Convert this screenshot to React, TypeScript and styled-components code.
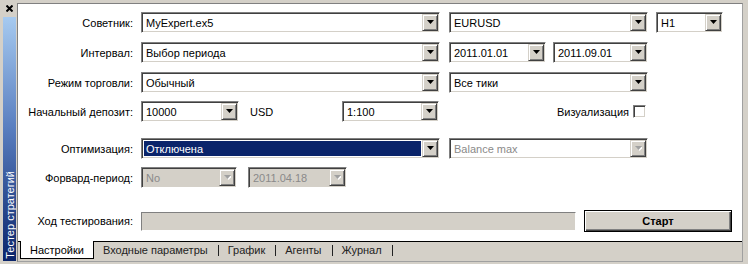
import { Fragment } from "react";
import styled, { createGlobalStyle } from "styled-components";

const GlobalStyle = createGlobalStyle`
	html, body {
		margin: 0;
		padding: 0;
		background: #d4d0c8;
	}
	body {
		font-family: "Liberation Sans", Arial, sans-serif;
		font-size: 11px;
		color: #000;
	}
`;

const Window = styled.div`
	display: flex;
	width: 748px;
	height: 264px;
	background: #d4d0c8;
	overflow: hidden;
`;

const SideStrip = styled.div`
	display: flex;
	flex-direction: column;
	width: 17px;
	flex-shrink: 0;
`;

const CloseMark = styled.div`
	display: flex;
	align-items: center;
	justify-content: center;
	height: 17px;
	padding-left: 1px;
`;

const SideBar = styled.div`
	display: flex;
	align-items: flex-end;
	justify-content: center;
	flex: 1;
	width: 13px;
	margin: 0 0 3px 3px;
	background: linear-gradient(to bottom, #a6caf0 0%, #5a7fc0 45%, #0a246a 100%);
`;

const SideTitle = styled.span`
	writing-mode: vertical-rl;
	transform: rotate(180deg);
	color: #fff;
	font-size: 11px;
	white-space: nowrap;
	padding-top: 2px;
`;

const Panel = styled.div`
	display: flex;
	flex-direction: column;
	flex: 1;
	height: 257px;
	margin: 3px 5px 0 0;
	border: 1px solid #808080;
	border-right-color: #a0a0a0;
	border-bottom-color: #a0a0a0;
`;

const Form = styled.div`
	display: flex;
	flex-direction: column;
	flex: 1;
	background: #fff;
	padding-top: 8px;
`;

const Row = styled.div<{ $gap: number; $h?: number }>`
	display: flex;
	align-items: center;
	height: ${({ $h }) => $h ?? 21}px;
	margin-top: ${({ $gap }) => $gap}px;
`;

const Label = styled.span`
	width: 115px;
	margin-right: 8px;
	text-align: right;
	white-space: nowrap;
`;

const Combo = styled.div<{ $w: number; $ml?: number; $disabled?: boolean }>`
	display: flex;
	align-items: stretch;
	box-sizing: border-box;
	width: ${({ $w }) => $w}px;
	height: 21px;
	margin-left: ${({ $ml }) => $ml ?? 0}px;
	padding: 1px;
	border: 1px solid;
	border-color: #808080 #ffffff #ffffff #808080;
	box-shadow: inset 1px 1px 0 #404040, inset -1px -1px 0 #d4d0c8;
	background: ${({ $disabled }) => ($disabled ? "#d4d0c8" : "#fff")};
`;

const ComboText = styled.span<{ $selected?: boolean; $muted?: boolean }>`
	display: flex;
	align-items: center;
	flex: 1;
	margin: 1px;
	padding-left: 2px;
	white-space: nowrap;
	overflow: hidden;
	background: ${({ $selected }) => ($selected ? "#0a246a" : "transparent")};
	color: ${({ $selected, $muted }) =>
		$selected ? "#fff" : $muted ? "#8a8a8a" : "#000"};
`;

const DropButton = styled.div`
	display: flex;
	align-items: center;
	justify-content: center;
	box-sizing: border-box;
	width: 16px;
	border: 1px solid;
	border-color: #d4d0c8 #404040 #404040 #d4d0c8;
	box-shadow: inset 1px 1px 0 #fff, inset -1px -1px 0 #808080;
	background: #d4d0c8;
`;

const Unit = styled.span`
	width: 92px;
	margin-left: 11px;
`;

const CheckGroup = styled.div`
	display: flex;
	align-items: center;
	justify-content: flex-end;
	width: 207px;
	padding-right: 1px;
	gap: 4px;
`;

const CheckBox = styled.div`
	box-sizing: border-box;
	width: 13px;
	height: 13px;
	border: 1px solid;
	border-color: #808080 #ffffff #ffffff #808080;
	box-shadow: inset 1px 1px 0 #404040, inset -1px -1px 0 #d4d0c8;
	background: #fff;
`;

const Progress = styled.div`
	box-sizing: border-box;
	width: 435px;
	height: 19px;
	border: 1px solid;
	border-color: #808080 #ffffff #ffffff #808080;
	background: #d4d0c8;
`;

const StartButton = styled.button`
	box-sizing: border-box;
	width: 148px;
	height: 22px;
	margin-left: 8px;
	padding: 0;
	border: 1px solid #000;
	box-shadow: inset 1px 1px 0 #fff, inset -1px -1px 0 #404040,
		inset -2px -2px 0 #808080;
	background: #d4d0c8;
	font-family: "Liberation Sans", Arial, sans-serif;
	font-size: 11px;
	font-weight: bold;
	color: #000;
`;

const TabBar = styled.div`
	display: flex;
	align-items: flex-start;
	height: 19px;
	padding-left: 2px;
	border-top: 1px solid #000;
	background: #d4d0c8;
`;

const Tab = styled.div<{ $active?: boolean }>`
	display: flex;
	align-items: center;
	height: ${({ $active }) => ($active ? 17 : 16)}px;
	margin-top: ${({ $active }) => ($active ? -1 : 0)}px;
	padding: ${({ $active }) => ($active ? "0 9px" : "0 10px 0 9px")};
	border: ${({ $active }) => ($active ? "1px solid #000" : "none")};
	border-top: none;
	background: ${({ $active }) => ($active ? "#fff" : "transparent")};
	color: ${({ $active }) => ($active ? "#000" : "#222")};
	white-space: nowrap;
`;

const TabSeparator = styled.span`
	width: 1px;
	height: 11px;
	margin-top: 3px;
	background: #222;
`;

function Arrow({ disabled }: { disabled?: boolean }) {
	return (
		<svg width="7" height="5" viewBox="0 0 7 5">
			{disabled && <path d="M1 1h7l-3.5 4z" fill="#fff" />}
			<path d="M0 0h7l-3.5 4z" fill={disabled ? "#a0a0a0" : "#000"} />
		</svg>
	);
}

type ComboProps = {
	text: string;
	w: number;
	ml?: number;
	selected?: boolean;
	disabled?: boolean;
	muted?: boolean;
};

function ComboBox({ text, w, ml, selected, disabled, muted }: ComboProps) {
	return (
		<Combo $w={w} $ml={ml} $disabled={disabled}>
			<ComboText $selected={selected} $muted={muted || disabled}>
				{text}
			</ComboText>
			<DropButton>
				<Arrow disabled={disabled || muted} />
			</DropButton>
		</Combo>
	);
}

const tabs = ["Входные параметры", "График", "Агенты", "Журнал"];

export default function App() {
	return (
		<>
			<GlobalStyle />
			<Window>
				<SideStrip>
					<CloseMark>
						<svg width="7" height="7" viewBox="0 0 7 7">
							<path d="M0.5 0.5l6 6M6.5 0.5l-6 6" stroke="#000" strokeWidth="2" />
						</svg>
					</CloseMark>
					<SideBar>
						<SideTitle>Тестер стратегий</SideTitle>
					</SideBar>
				</SideStrip>

				<Panel>
					<Form>
						<Row $gap={0}>
							<Label>Советник:</Label>
							<ComboBox text="MyExpert.ex5" w={299} />
							<ComboBox text="EURUSD" w={199} ml={9} />
							<ComboBox text="H1" w={67} ml={8} />
						</Row>
						<Row $gap={9}>
							<Label>Интервал:</Label>
							<ComboBox text="Выбор периода" w={299} />
							<ComboBox text="2011.01.01" w={97} ml={9} />
							<ComboBox text="2011.09.01" w={95} ml={7} />
						</Row>
						<Row $gap={9}>
							<Label>Режим торговли:</Label>
							<ComboBox text="Обычный" w={299} />
							<ComboBox text="Все тики" w={199} ml={9} />
						</Row>
						<Row $gap={8}>
							<Label>Начальный депозит:</Label>
							<ComboBox text="10000" w={98} />
							<Unit>USD</Unit>
							<ComboBox text="1:100" w={97} />
							<CheckGroup>
								<span>Визуализация</span>
								<CheckBox />
							</CheckGroup>
						</Row>
						<Row $gap={16}>
							<Label>Оптимизация:</Label>
							<ComboBox text="Отключена" w={299} selected />
							<ComboBox text="Balance max" w={199} ml={9} muted />
						</Row>
						<Row $gap={8}>
							<Label>Форвард-период:</Label>
							<ComboBox text="No" w={96} disabled />
							<ComboBox text="2011.04.18" w={99} ml={11} disabled />
						</Row>
						<Row $gap={22} $h={22}>
							<Label>Ход тестирования:</Label>
							<Progress />
							<StartButton>Старт</StartButton>
						</Row>
					</Form>
					<TabBar>
						<Tab $active>Настройки</Tab>
						{tabs.map((t) => (
							<Fragment key={t}>
								<Tab>{t}</Tab>
								<TabSeparator />
							</Fragment>
						))}
					</TabBar>
				</Panel>
			</Window>
		</>
	);
}
